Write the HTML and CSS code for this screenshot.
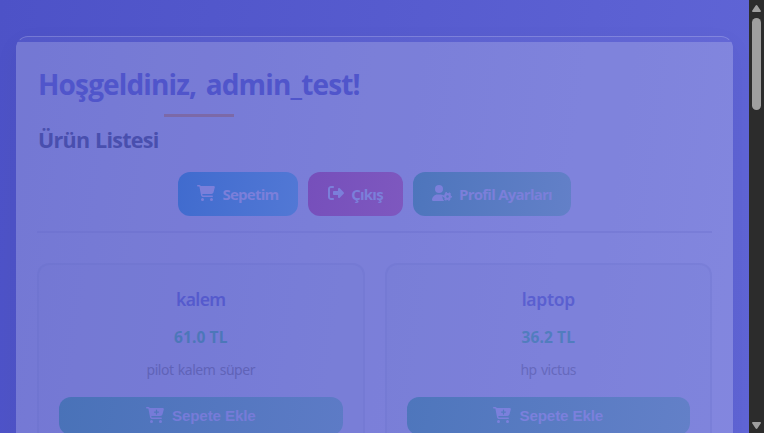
FILE: index.html
```html
<!DOCTYPE html>
<html lang="tr">
<head>
<meta charset="utf-8">
<title>Ürün Listesi</title>
<link rel="stylesheet" href="styles.css">
</head>
<body>
<svg class="defs" aria-hidden="true">
  <symbol id="cart" viewBox="0 0 576 512"><path d="M0 24C0 10.7 10.7 0 24 0H69.5c22 0 41.5 12.8 50.6 32h411c26.3 0 45.5 25 38.6 50.4l-41 152.3c-8.5 31.4-37 53.3-69.5 53.3H170.7l5.4 28.5c2.2 11.3 12.1 19.5 23.6 19.5H488c13.3 0 24 10.7 24 24s-10.7 24-24 24H199.7c-34.6 0-64.3-24.6-70.7-58.5L77.4 54.5c-.7-3.8-4-6.5-7.9-6.5H24C10.7 48 0 37.3 0 24zM128 464a48 48 0 1 1 96 0 48 48 0 1 1-96 0zm336-48a48 48 0 1 1 0 96 48 48 0 1 1 0-96z"/></symbol>
  <symbol id="cart-plus" viewBox="0 0 576 512"><path fill-rule="evenodd" d="M0 24C0 10.7 10.7 0 24 0H69.5c22 0 41.5 12.8 50.6 32h411c26.3 0 45.5 25 38.6 50.4l-41 152.3c-8.5 31.4-37 53.3-69.5 53.3H170.7l5.4 28.5c2.2 11.3 12.1 19.5 23.6 19.5H488c13.3 0 24 10.7 24 24s-10.7 24-24 24H199.7c-34.6 0-64.3-24.6-70.7-58.5L77.4 54.5c-.7-3.8-4-6.5-7.9-6.5H24C10.7 48 0 37.3 0 24zM128 464a48 48 0 1 1 96 0 48 48 0 1 1-96 0zm336-48a48 48 0 1 1 0 96 48 48 0 1 1 0-96zM252 160c0 11 9 20 20 20h44v44c0 11 9 20 20 20s20-9 20-20V180h44c11 0 20-9 20-20s-9-20-20-20H356V96c0-11-9-20-20-20s-20 9-20 20v44H272c-11 0-20 9-20 20z"/></symbol>
  <symbol id="exit" viewBox="0 0 512 512"><path d="M377.9 105.9L500.7 228.7c7.2 7.2 11.3 17.1 11.3 27.3s-4.1 20.1-11.3 27.3L377.9 406.1c-6.4 6.4-15 9.9-24 9.9c-18.7 0-33.9-15.2-33.9-33.9v-62.1H192c-17.7 0-32-14.3-32-32v-64c0-17.7 14.3-32 32-32h128v-62.1c0-18.7 15.2-33.9 33.9-33.9c9 0 17.6 3.6 24 9.9zM160 96H96c-17.7 0-32 14.3-32 32v256c0 17.7 14.3 32 32 32h64c17.7 0 32 14.3 32 32s-14.3 32-32 32H96c-53 0-96-43-96-96V128C0 75 43 32 96 32h64c17.7 0 32 14.3 32 32s-14.3 32-32 32z"/></symbol>
  <symbol id="user-gear" viewBox="0 0 640 512"><circle cx="224" cy="128" r="128"/><path d="M178 304h92c35 0 67 10 94 27-22 25-37 55-27 80 15 38 20 75 57 101H30c-17 0-30-13-30-30 0-98 80-178 178-178z"/><circle cx="496" cy="368" r="76" fill="none" stroke="currentColor" stroke-width="70"/><circle cx="496" cy="368" r="121" fill="none" stroke="currentColor" stroke-width="44" stroke-dasharray="66 60.7" stroke-dashoffset="33"/></symbol>
</svg>
<div class="window">
  <div class="page">
    <main class="container">
      <div class="accent"></div>
      <div class="content">
        <h1>Hoşgeldiniz, admin_test!</h1>
        <div class="underline"></div>
        <h2>Ürün Listesi</h2>
        <nav class="actions">
          <a class="btn basket"><svg class="i18"><use href="#cart"/></svg><span>Sepetim</span></a>
          <a class="btn logout"><svg class="i16"><use href="#exit"/></svg><span>Çıkış</span></a>
          <a class="btn profile"><svg class="i20"><use href="#user-gear"/></svg><span>Profil Ayarları</span></a>
        </nav>
        <section class="products">
          <article class="card">
            <h3>kalem</h3>
            <p class="price">61.0 TL</p>
            <p class="desc">pilot kalem süper</p>
            <button class="add"><svg class="i17"><use href="#cart-plus"/></svg><span>Sepete Ekle</span></button>
          </article>
          <article class="card second">
            <h3>laptop</h3>
            <p class="price">36.2 TL</p>
            <p class="desc">hp victus</p>
            <button class="add"><svg class="i17"><use href="#cart-plus"/></svg><span>Sepete Ekle</span></button>
          </article>
        </section>
      </div>
    </main>
  </div>
  <aside class="scrollbar">
    <svg viewBox="0 0 9 7"><path d="M4.5 0Q5 0 5.5 .8L9 6Q9 7 8 7H1Q0 7 0 6L3.5 .8Q4 0 4.5 0z"/></svg>
    <div class="thumb"></div>
    <svg class="down" viewBox="0 0 9 7"><path d="M4.5 7Q5 7 5.5 6.2L9 1Q9 0 8 0H1Q0 0 0 1L3.5 6.2Q4 7 4.5 7z"/></svg>
  </aside>
</div>
</body>
</html>
```
FILE: styles.css
```css
* { box-sizing: border-box; }
body { margin: 0; overflow: hidden; font-family: "Noto Sans", "Open Sans", sans-serif; }
.defs { display: none; }
.window { display: flex; height: 433px; overflow: hidden; }
.page {
  flex: 1;
  padding: 36px 16px 0;
  background: linear-gradient(98deg, #4d52c7, #6065d6);
}
.container {
  height: 700px;
  overflow: hidden;
  border: 1px solid rgba(255, 255, 255, .2);
  border-bottom: 0;
  border-left-color: transparent;
  border-right-color: transparent;
  border-radius: 12px;
  background: linear-gradient(rgba(255, 255, 255, .03) 6px, rgba(255, 255, 255, .22) 6px) border-box;
  box-shadow: 0 8px 24px rgba(0, 0, 60, .05);
}
.accent { height: 5px; }
.content { padding: 23px 20px 0; }
h1, h2, h3, p { margin: 0; white-space: nowrap; }
h1 { height: 49px; padding-left: 1px; line-height: 39px; font-family: "Open Sans", sans-serif; font-size: 28px; font-weight: 700; letter-spacing: -.85px; word-spacing: 3px; color: #5055cb; }
.underline { width: 70px; height: 3px; margin-left: 127px; background: #7c69a8; }
h2 { height: 55px; padding-left: 1px; line-height: 45px; font-family: "Open Sans", sans-serif; font-size: 21.5px; font-weight: 700; letter-spacing: -.75px; word-spacing: 1px; color: #494fae; }
.actions { display: flex; justify-content: center; gap: 10px; height: 61px; border-bottom: 2px solid rgba(100, 104, 200, .28); }
.btn {
  display: flex;
  align-items: center;
  justify-content: center;
  gap: 7px;
  height: 44px;
  border-radius: 12px;
  color: #7b7fda;
  font-family: "Open Sans", sans-serif;
  font-size: 15px;
  font-weight: 700;
  letter-spacing: -.75px;
  white-space: nowrap;
}
.btn svg { margin-bottom: 2px; }
.basket { width: 120px; background: linear-gradient(100deg, #406bce, #5278d5); }
.logout { width: 95px; background: linear-gradient(100deg, #764fbb, #7e58bf); }
.profile { width: 158px; background: linear-gradient(100deg, #4d75bc, #6380c8); }
svg { fill: currentColor; flex: none; }
.i18 { width: 18px; height: 16px; }
.i17 { width: 18px; height: 16px; }
.i16 { width: 16px; height: 16px; }
.i20 { width: 20px; height: 16px; }
.products { display: grid; grid-template-columns: 1fr 1fr; gap: 20px; margin-top: 30px; }
.card {
  height: 230px;
  padding: 20px;
  border: 2px solid rgba(95, 98, 190, .14);
  border-radius: 12px;
  background: rgba(112, 113, 210, .1);
  text-align: center;
}
h3 { height: 34px; line-height: 29px; font-size: 17.5px; font-weight: 600; letter-spacing: -.6px; color: #555acd; }
.price { height: 34px; line-height: 37px; font-family: "Open Sans", sans-serif; font-size: 15.5px; font-weight: 700; letter-spacing: .1px; color: #4c77b9; }
.desc { height: 44px; line-height: 34px; font-size: 14px; letter-spacing: -.45px; word-spacing: 1px; color: #6063b8; }
.second h3 { letter-spacing: -.3px; color: #5a5fd0; }
.second .price { color: #517dbe; }
.second .desc { color: #6669bd; }
.add {
  display: flex;
  align-items: center;
  justify-content: center;
  gap: 8px;
  width: 100%;
  height: 38px;
  padding: 0;
  border: 0;
  border-radius: 12px;
  color: #767bd8;
  background: linear-gradient(100deg, #4972b8, #5d7bc6);
  font: 700 15.2px "Liberation Sans", Arial, sans-serif;
  letter-spacing: -.15px;
}
.add svg { margin-bottom: 2px; }
.add span { padding-bottom: 1px; }
.second .add { color: #7b80dc; background: linear-gradient(100deg, #4e76bc, #6380c8); }
.scrollbar {
  display: flex;
  flex-direction: column;
  align-items: center;
  width: 15px;
  padding: 5px 0 4px;
  background: #2c2c2c;
  color: #9f9f9f;
}
.scrollbar svg { width: 9px; height: 7px; }
.thumb { width: 9px; height: 92px; margin-top: 6px; border-radius: 5px; background: #9f9f9f; }
.scrollbar .down { margin-top: auto; }
```
